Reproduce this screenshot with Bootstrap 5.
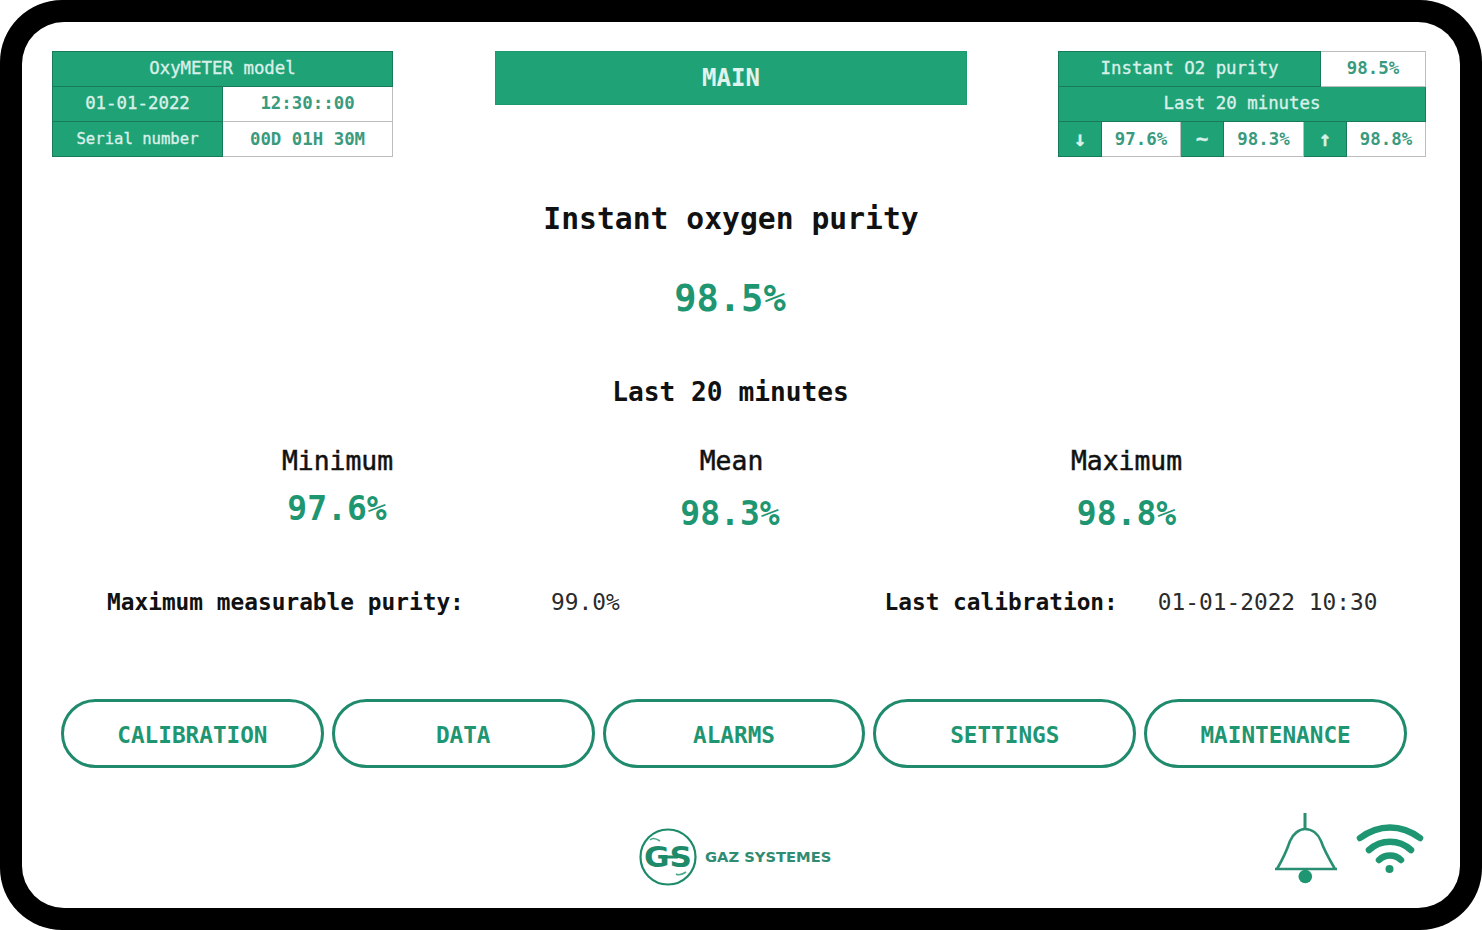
<!DOCTYPE html>
<html lang="en">
<head>
    <meta charset="UTF-8">
    <meta name="viewport" content="width=device-width, initial-scale=1.0">
    <title>OxyMETER main</title>
    <link href="https://cdn.jsdelivr.net/npm/bootstrap@5.3.2/dist/css/bootstrap.min.css" rel="stylesheet">
    <style>
        body { background: #fff; font-family: "DejaVu Sans Mono", "Liberation Mono", monospace; color: #111; }
        .frame { width: 1482px; height: 930px; background: #000; border-radius: 62px; padding: 22px; }
        .screen { height: 886px; background: #fff; border-radius: 42px; padding: 29px 34px 0 30px; }

        .info-table { table-layout: fixed; border-collapse: collapse; height: 106px; font-size: 17.4px; text-align: center; }
        .info-table td { padding: 0; height: 35px; line-height: 1; border: 1px solid #bdbdbd; color: #3a9a7e; font-weight: 700; background: #fff; }
        .info-table tr:last-child td { padding-top: 1px; }
        .info-table td.fill { background: #20a277; color: #d9f0e8; border-color: #177a5b; font-weight: 500; -webkit-text-stroke: 0.35px #d9f0e8; }
        .info-table td.tiny { font-size: 15.6px; }
        .info-table td.glyph { font-size: 21px; font-weight: 700; }
        .model-table { width: 341px; }
        .purity-table { width: 367px; margin-left: auto; }

        .main-bar { width: 472px; height: 54px; margin-left: 102px; background: #20a277; border: 1px solid #1c9a70; color: #e0f3ec; font-size: 24px; font-weight: 700; }

        .centered { margin-right: 16px; }
        .big-title { margin-top: 42px; font-size: 29.7px; line-height: 40px; font-weight: 700; }
        .big-value { margin-top: 35px; margin-right: 18px; font-size: 37px; line-height: 50px; font-weight: 700; color: #1f9672; }
        .sub-title { margin-top: 50px; margin-right: 17px; font-size: 26.2px; line-height: 36px; font-weight: 700; }
        .stats { width: 1185px; margin: 34px 0 0 87px; }
        .stat-label { font-size: 26.4px; line-height: 34px; font-weight: 500; -webkit-text-stroke: 0.5px #111; }
        .stat-label.nudged { margin-left: 2px; }
        .stat-value { margin-top: 14px; font-size: 33px; line-height: 44px; font-weight: 700; color: #1f9672; }
        .stat-value.raised { margin-top: 9px; margin-bottom: 5px; margin-left: 1px; }
        .stat-value.nudged { margin-right: 3px; }

        .facts { margin: 50px 0 0 55px; font-size: 22.8px; line-height: 30px; padding-top: 1px; }
        .facts span { color: #2b2b2b; }
        .fact-a { width: 444px; }
        .fact-b { width: 333.5px; }
        .fact-gap { margin-left: 40px; }

        .nav-row { margin: 82px 19px 0 9px; }
        .pill-btn { flex: 1 1 0; height: 69px; padding: 3px 0 0; border: 3px solid #1f8a6c; border-radius: 35px; background: #fff; color: #1f9672; font-size: 22.7px; font-weight: 700; line-height: 1; }
        .pill-btn:hover { background: #eaf7f2; color: #1f9672; border-color: #1f8a6c; }

        .foot { margin-top: 42px; height: 76px; }
        .foot-left { width: 586px; }
        .foot-brand { padding-top: 17px; }
        .brand-name { font-family: "DejaVu Sans", "Liberation Sans", sans-serif; font-size: 14.7px; font-weight: 700; color: #2f8b72; margin: 1px 0 0 7px; }
        .logo-letters { font-family: "DejaVu Sans", "Liberation Sans", sans-serif; font-size: 28px; font-weight: 700; fill: #1d8a6a; }
        .foot-icons { flex: 1 1 0; padding-right: 1px; }
        .wifi-icon { margin: 10px 0 0 13px; }
    </style>
</head>
<body class="m-0">

<div class="frame">
  <div class="screen">

    <div class="d-flex align-items-start">
      <table class="info-table model-table">
        <tr><td class="fill" colspan="2">OxyMETER model</td></tr>
        <tr><td class="fill">01-01-2022</td><td>12:30::00</td></tr>
        <tr><td class="fill tiny">Serial number</td><td>00D 01H 30M</td></tr>
      </table>

      <div class="main-bar d-flex align-items-center justify-content-center">MAIN</div>

      <table class="info-table purity-table">
        <colgroup>
          <col style="width:43px"><col style="width:79px"><col style="width:43px"><col style="width:80px"><col style="width:17px"><col style="width:26px"><col style="width:79px">
        </colgroup>
        <tr><td class="fill" colspan="5">Instant O2 purity</td><td colspan="2">98.5%</td></tr>
        <tr><td class="fill" colspan="7">Last 20 minutes</td></tr>
        <tr><td class="fill glyph">↓</td><td>97.6%</td><td class="fill glyph">~</td><td>98.3%</td><td class="fill glyph" colspan="2">↑</td><td>98.8%</td></tr>
      </table>
    </div>

    <div class="text-center centered big-title">Instant oxygen purity</div>
    <div class="text-center big-value">98.5%</div>
    <div class="text-center sub-title">Last 20 minutes</div>

    <div class="row g-0 text-center stats">
      <div class="col-4">
        <div class="stat-label nudged">Minimum</div>
        <div class="stat-value raised">97.6%</div>
      </div>
      <div class="col-4">
        <div class="stat-label">Mean</div>
        <div class="stat-value nudged">98.3%</div>
      </div>
      <div class="col-4">
        <div class="stat-label">Maximum</div>
        <div class="stat-value">98.8%</div>
      </div>
    </div>

    <div class="d-flex facts">
      <div class="fact-a"><b>Maximum measurable purity:</b></div>
      <div class="fact-b"><span>99.0%</span></div>
      <div><b>Last calibration:</b></div>
      <div class="fact-gap"><span>01-01-2022 10:30</span></div>
    </div>

    <div class="d-flex gap-2 nav-row">
      <button class="btn pill-btn">CALIBRATION</button>
      <button class="btn pill-btn">DATA</button>
      <button class="btn pill-btn">ALARMS</button>
      <button class="btn pill-btn">SETTINGS</button>
      <button class="btn pill-btn">MAINTENANCE</button>
    </div>

    <div class="d-flex foot">
      <div class="foot-left"></div>
      <div class="d-flex align-items-center align-self-start foot-brand">
        <svg width="60" height="60" viewBox="0 0 60 60">
          <circle cx="30" cy="30" r="27.5" fill="none" stroke="#1d8a6a" stroke-width="2.2"/>
          <text class="logo-letters" x="30" y="40" text-anchor="middle" textLength="48" lengthAdjust="spacingAndGlyphs">GS</text>
          <path d="M24 30H40" fill="none" stroke="#1d8a6a" stroke-width="3"/>
          <path d="M12 13C15 10 19 12 22 14M38 47C41 49 45 47 48 45" fill="none" stroke="#4aa88c" stroke-width="1.6"/>
        </svg>
        <span class="brand-name">GAZ SYSTEMES</span>
      </div>
      <div class="foot-icons d-flex justify-content-end align-items-start">
        <svg width="72" height="76" viewBox="0 0 72 76">
          <path d="M35 3V19" fill="none" stroke="#2a8f72" stroke-width="3"/>
          <path d="M5 59H67M7 59C14 47 17 40 20 31C23 24 29 19 35 19C42 19 48 24 51 31C54 40 58 47 65 59" fill="none" stroke="#2a8f72" stroke-width="2.6"/>
          <circle cx="35.3" cy="66.5" r="6.8" fill="#1f9672"/>
        </svg>
        <svg class="wifi-icon" width="70" height="60" viewBox="0 0 70 60">
          <g fill="none" stroke="#1f9672" stroke-width="6.5" stroke-linecap="round">
            <path d="M5 18C24 4 46 4 65 18"/>
            <path d="M14 30C26 19 44 19 56 30"/>
            <path d="M24 40C30 34 40 34 46 40"/>
          </g>
          <circle cx="34.5" cy="49" r="4" fill="#1f9672"/>
        </svg>
      </div>
    </div>

  </div>
</div>

</body>
</html>
